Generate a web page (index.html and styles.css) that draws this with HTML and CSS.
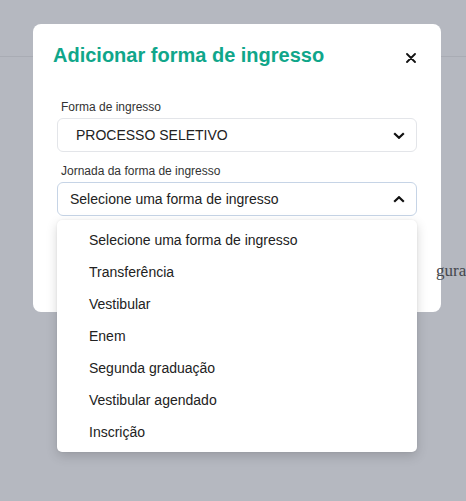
FILE: index.html
```html
<!DOCTYPE html>
<html lang="pt-BR">

<head>
  <meta charset="UTF-8">
  <meta name="viewport" content="width=device-width, initial-scale=1.0">
  <title>Adicionar forma de ingresso</title>
  <link rel="stylesheet" href="styles.css">
</head>

<body>
  <div class="page">
    <div class="topbar"></div>
    <p class="behind-text">gura</p>
  </div>

  <div class="modal">
    <div class="modal-header">
      <h2 class="modal-title">Adicionar forma de ingresso</h2>
      <button class="modal-close" type="button" aria-label="Fechar">
        <svg width="10" height="10" viewBox="0 0 10 10">
          <path d="M1 1L9 9M9 1L1 9" stroke="#111" stroke-width="1.8" stroke-linecap="round" fill="none" />
        </svg>
      </button>
    </div>

    <div class="modal-body">
      <div class="field">
        <label class="field-label">Forma de ingresso</label>
        <div class="select select-filled">
          <span>PROCESSO SELETIVO</span>
          <svg class="chevron" width="12" height="7" viewBox="0 0 12 7">
            <path d="M1.2 1.2L6 5.8L10.8 1.2" stroke="#111" stroke-width="2.2" fill="none" />
          </svg>
        </div>
      </div>

      <div class="field field-open">
        <label class="field-label">Jornada da forma de ingresso</label>
        <div class="select select-focus">
          <span>Selecione uma forma de ingresso</span>
          <svg class="chevron" width="12" height="7" viewBox="0 0 12 7">
            <path d="M1.2 5.8L6 1.2L10.8 5.8" stroke="#111" stroke-width="2.2" fill="none" />
          </svg>
        </div>

        <ul class="dropdown">
          <li>Selecione uma forma de ingresso</li>
          <li>Transferência</li>
          <li>Vestibular</li>
          <li>Enem</li>
          <li>Segunda graduação</li>
          <li>Vestibular agendado</li>
          <li>Inscrição</li>
        </ul>
      </div>
    </div>
  </div>
</body>

</html>
```

FILE: styles.css
```css
* {
  padding: 0;
  margin: 0;
  box-sizing: border-box;
}

ul {
  list-style: none;
}

body {
  background-color: #b5b8c0;
  font-family: "Liberation Sans", Arial, sans-serif;
  color: #222;
  overflow: hidden;
}

.page {
  height: 501px;
}

.topbar {
  height: 57px;
  border-bottom: 1px solid #a9acb4;
}

/* texto da página que fica por cima do modal */
.behind-text {
  position: absolute;
  z-index: 10;
  left: 436px;
  top: 262px;
  font-family: "Liberation Serif", serif;
  font-size: 17px;
  line-height: 18px;
  color: #45474d;
  white-space: nowrap;
}

.modal {
  position: absolute;
  left: 33px;
  top: 24px;
  width: 408px;
  height: 288px;
  background-color: #fff;
  border-radius: 8px;
}

.modal-header {
  display: flex;
  justify-content: space-between;
  align-items: flex-start;
  padding: 20px 25px 0 20px;
}

.modal-title {
  font-size: 20px;
  line-height: 22px;
  font-weight: bold;
  color: #10a68a;
}

.modal-close {
  display: flex;
  margin-top: 9px;
  border: none;
  background: none;
}

.modal-body {
  padding: 33px 24px 0;
}

.field + .field {
  margin-top: 11px;
}

.field-open {
  position: relative;
}

.field-label {
  display: block;
  padding-left: 4px;
  font-size: 12px;
  line-height: 16px;
  margin-bottom: 3px;
  color: #333;
}

.select {
  display: flex;
  align-items: center;
  justify-content: space-between;
  height: 34px;
  padding: 0 11px 0 12px;
  border: 1px solid #e3e5e9;
  border-radius: 6px;
  font-size: 14px;
  color: #222;
}

.select-filled {
  padding-left: 18px;
}

.select-focus {
  border-color: #c6d4e6;
}

.dropdown {
  position: absolute;
  z-index: 5;
  top: calc(100% + 4px);
  left: 0;
  width: 360px;
  padding: 4px 0;
  background-color: #fff;
  border-radius: 5px;
  box-shadow: 0 4px 12px rgba(0, 0, 0, .16), 0 0 2px rgba(0, 0, 0, .08);
}

.dropdown li {
  padding-left: 32px;
  font-size: 14px;
  line-height: 32px;
  color: #222;
}
```
